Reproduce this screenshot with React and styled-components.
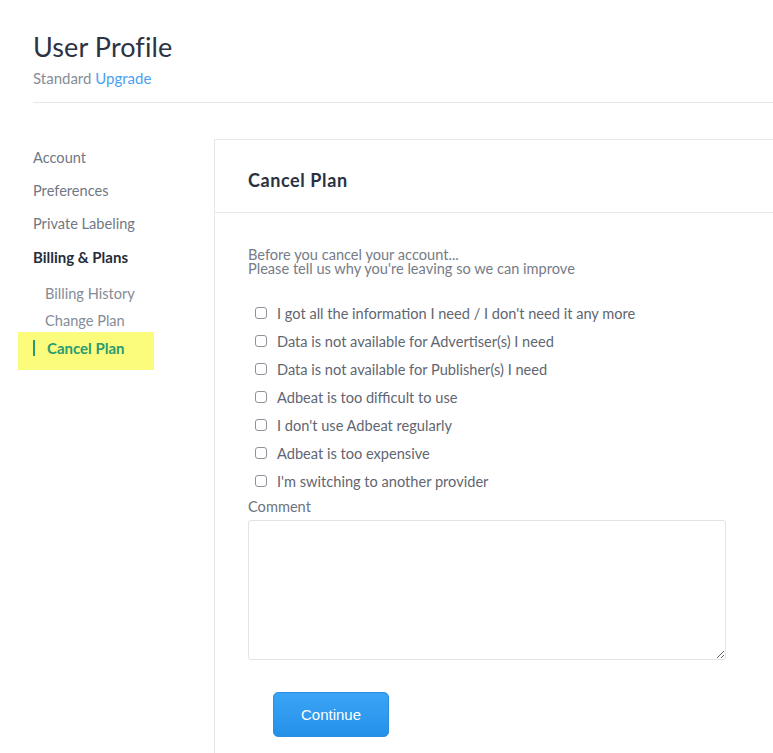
import React from "react";
import styled, { createGlobalStyle } from "styled-components";

const GlobalStyle = createGlobalStyle`
  html, body {
    margin: 0;
    padding: 0;
    background: #fff;
  }
  body {
    font-family: Lato, "Open Sans", sans-serif;
    color: #2e3440;
  }
  * { box-sizing: border-box; }
`;

const Page = styled.div`
  width: 773px;
  height: 753px;
  overflow: hidden;
  padding-top: 30px;
`;

const Header = styled.header`
  margin-left: 33px;
  padding-bottom: 15px;
  border-bottom: 1px solid #e6e7eb;
`;

const Title = styled.h1`
  margin: 0;
  font-size: 27px;
  font-weight: 400;
  line-height: 34px;
  color: #2c3342;
  letter-spacing: 0.1px;
`;

const Plan = styled.div`
  margin-top: 5px;
  font-size: 15px;
  line-height: 18px;
  color: #868d98;
  a {
    color: #4b9ff2;
    text-decoration: none;
  }
`;

const Body = styled.div`
  display: flex;
  margin-top: 36px;
`;

const Sidebar = styled.nav`
  width: 214px;
  flex-shrink: 0;
  padding-top: 10px;
`;

const NavItem = styled.div`
  margin-left: 33px;
  font-size: ${(p) => (p.$active ? "15px" : "14.6px")};
  line-height: 18px;
  height: 33px;
  color: ${(p) => (p.$active ? "#262c3a" : "#717884")};
  font-weight: ${(p) => (p.$active ? 700 : 400)};
`;

const SubList = styled.div`
  padding-top: 4px;
`;

const SubItem = styled.div`
  margin-left: 45px;
  font-size: 14.6px;
  line-height: 18px;
  height: 27px;
  color: #858b96;
`;

const Highlight = styled.div`
  margin: -7px 0 0 18px;
  width: 136px;
  height: 38px;
  background: #fcfc7c;
  display: flex;
  align-items: flex-start;
  padding: 8px 0 0 15px;
`;

const ActiveSub = styled.span`
  border-left: 2px solid #2a9a70;
  padding-left: 12px;
  font-size: 15px;
  font-weight: 700;
  line-height: 16px;
  color: #2a9a70;
`;

const Panel = styled.section`
  flex: 1;
  border-left: 1px solid #e6e7eb;
  border-top: 1px solid #e6e7eb;
  min-height: 700px;
`;

const PanelHead = styled.div`
  height: 73px;
  border-bottom: 1px solid #e6e7eb;
  padding-left: 33px;
  display: flex;
  align-items: center;
`;

const PanelTitle = styled.h2`
  margin: 0;
  font-size: 18px;
  font-weight: 700;
  letter-spacing: 0.6px;
  color: #2a3140;
  padding-top: 7px;
`;

const PanelBody = styled.div`
  padding: 35px 0 0 33px;
`;

const Intro = styled.p`
  margin: 0 0 23px;
  font-size: 14.6px;
  line-height: 14px;
  color: #767c87;
`;

const Option = styled.label`
  display: flex;
  align-items: center;
  height: 28px;
  padding-left: 7px;
  font-size: 14.6px;
  color: #5f6671;
`;

const Box = styled.span`
  width: 12px;
  height: 12px;
  border: 1px solid #8e939b;
  border-radius: 3px;
  margin-right: 10px;
  background: #fff;
`;

const Label = styled.div`
  margin-top: 3px;
  font-size: 14.6px;
  line-height: 18px;
  color: #6e7480;
`;

const Comment = styled.textarea`
  display: block;
  margin-top: 4px;
  width: 478px;
  height: 140px;
  border: 1px solid #e2e3e7;
  border-radius: 3px;
  resize: vertical;
`;

const Button = styled.button`
  margin: 32px 0 0 25px;
  width: 116px;
  height: 45px;
  border: 1px solid #2a8fe2;
  border-radius: 5px;
  background: linear-gradient(#3aa5f6, #2590e8);
  color: #fff;
  font-family: "Liberation Sans", Arial, sans-serif;
  font-size: 15px;
`;

const reasons = [
  "I got all the information I need / I don't need it any more",
  "Data is not available for Advertiser(s) I need",
  "Data is not available for Publisher(s) I need",
  "Adbeat is too difficult to use",
  "I don't use Adbeat regularly",
  "Adbeat is too expensive",
  "I'm switching to another provider",
];

export default function App() {
  return (
    <Page>
      <GlobalStyle />
      <Header>
        <Title>User Profile</Title>
        <Plan>
          Standard <a href="#">Upgrade</a>
        </Plan>
      </Header>
      <Body>
        <Sidebar>
          <NavItem>Account</NavItem>
          <NavItem>Preferences</NavItem>
          <NavItem>Private Labeling</NavItem>
          <NavItem $active>Billing &amp; Plans</NavItem>
          <SubList>
            <SubItem>Billing History</SubItem>
            <SubItem>Change Plan</SubItem>
            <Highlight>
              <ActiveSub>Cancel Plan</ActiveSub>
            </Highlight>
          </SubList>
        </Sidebar>
        <Panel>
          <PanelHead>
            <PanelTitle>Cancel Plan</PanelTitle>
          </PanelHead>
          <PanelBody>
            <Intro>
              Before you cancel your account...
              <br />
              Please tell us why you're leaving so we can improve
            </Intro>
            {reasons.map((r) => (
              <Option key={r}>
                <Box />
                {r}
              </Option>
            ))}
            <Label>Comment</Label>
            <Comment />
            <Button>Continue</Button>
          </PanelBody>
        </Panel>
      </Body>
    </Page>
  );
}
